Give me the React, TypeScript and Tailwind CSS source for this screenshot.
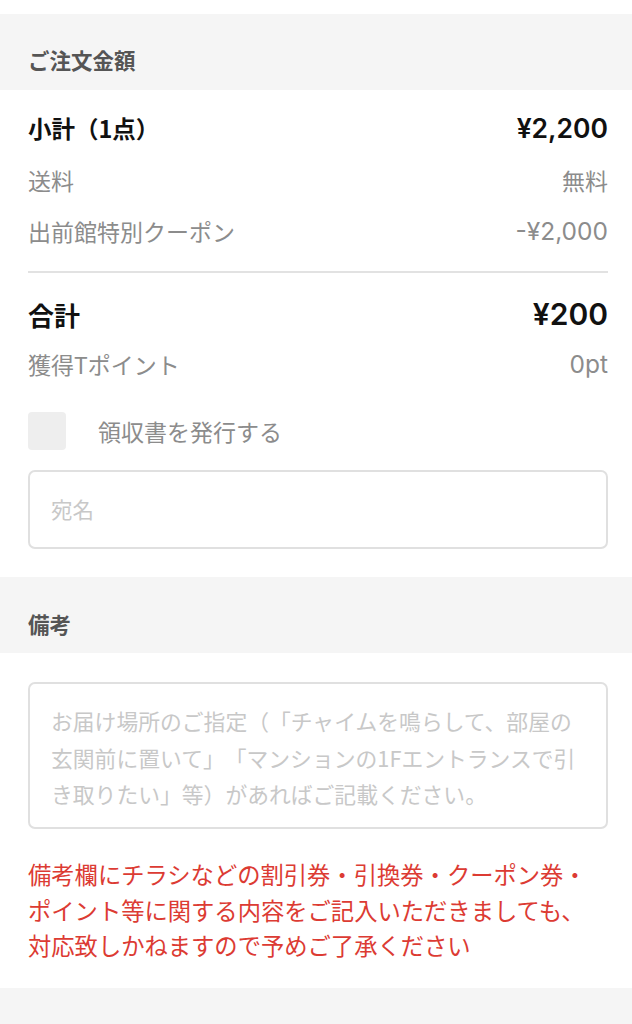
import React from "react";

const font = { fontFamily: '"Noto Sans CJK JP", "Noto Sans", sans-serif' };
const num = "font-['Inter','Noto_Sans_CJK_JP',sans-serif]";

export default function App() {
  return (
    <div className="w-[632px] min-h-[1024px] bg-[#f5f5f5] [text-spacing-trim:space-all]" style={font}>
      <div className="h-[14px] bg-white" />
      <div className="h-[76px] bg-[#f5f5f5] pl-7 pr-6 pt-[33px]">
        <div className="text-[21.5px] leading-[26px] font-bold text-[#555]">ご注文金額</div>
      </div>
      <div className="bg-white pl-7 pr-6 pt-[14px] pb-[28px]">
        <div className="h-[50px] flex items-center justify-between text-[#111] font-bold">
          <span className="text-[23.5px]">小計（1点）</span>
          <span className={`${num} text-[26.5px] font-semibold`}>¥2,200</span>
        </div>
        <div className="h-[52px] flex items-center justify-between text-[#8c8c8c] text-[23px]">
          <span>送料</span>
          <span>無料</span>
        </div>
        <div className="h-[50px] flex items-center justify-between text-[#8c8c8c] text-[23px]">
          <span>出前館特別クーポン</span>
          <span className={`${num} text-[24.5px]`}>-¥2,000</span>
        </div>
        <div className="mt-[15px] h-[2px] bg-[#e2e2e2]" />
        <div className="pt-[16px]">
          <div className="h-[50px] flex items-center justify-between text-[#111] font-bold">
            <span className="text-[26px]">合計</span>
            <span className={`${num} text-[30px] font-semibold`}>¥200</span>
          </div>
        </div>
        <div className="h-[50px] flex items-center justify-between text-[#8c8c8c] text-[23px]">
          <span>獲得Tポイント</span>
          <span className={`${num} text-[24.5px]`}>0pt</span>
        </div>
        <div className="mt-[23px] flex items-center h-[38px]">
          <div className="w-[38px] h-[38px] rounded-[4px] bg-[#eeeeee]" />
          <span className="ml-[32px] text-[23px] text-[#8c8c8c]">領収書を発行する</span>
        </div>
        <div className="mt-[20px] h-[79px] rounded-[7px] border-2 border-[#e0e0e0] flex items-center px-[21px]">
          <span className="text-[21.5px] text-[#c8c8c8]">宛名</span>
        </div>
      </div>
      <div className="h-[76px] bg-[#f5f5f5] pl-7 pr-6 pt-[34px]">
        <div className="text-[21.5px] leading-[26px] font-bold text-[#555]">備考</div>
      </div>
      <div className="bg-white pl-7 pr-6 pt-[29px] pb-[24px]">
        <div className="h-[147px] rounded-[7px] border-2 border-[#e0e0e0] px-[21px] pt-[19px] text-[21.8px] leading-[36.7px] text-[#c8c8c8] whitespace-nowrap">
          お届け場所のご指定（「チャイムを鳴らして、部屋の<br />
          玄関前に置いて」「マンションの1Fエントランスで引<br />
          き取りたい」等）があればご記載ください。
        </div>
        <div className="mt-[28px] text-[23.3px] leading-[35.5px] text-[#dc3b33] whitespace-nowrap">
          備考欄にチラシなどの割引券・引換券・クーポン券・<br />
          ポイント等に関する内容をご記入いただきましても、<br />
          対応致しかねますので予めご了承ください
        </div>
      </div>
      <div className="h-[35px] bg-[#f5f5f5]" />
    </div>
  );
}
